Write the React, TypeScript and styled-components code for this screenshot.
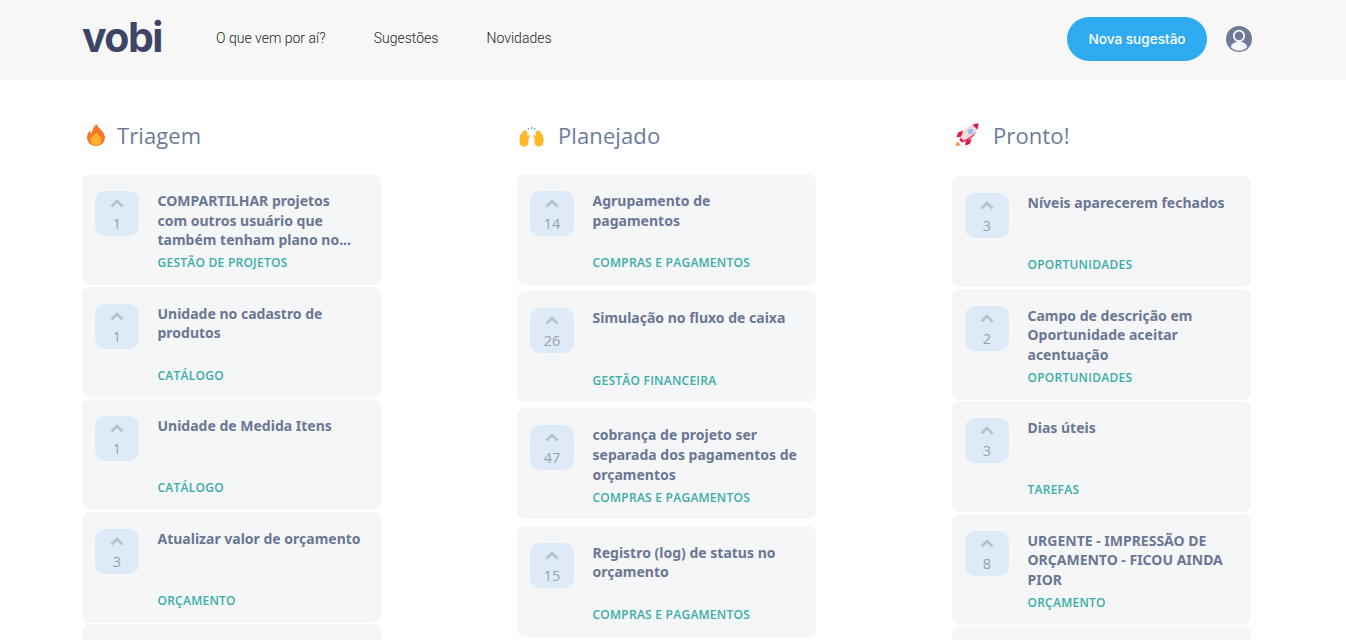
import React from "react";
import styled, { createGlobalStyle } from "styled-components";

const Global = createGlobalStyle`
  html, body { margin: 0; padding: 0; height: 640px; overflow: hidden; background: #fff; }
  * { box-sizing: border-box; }
`;

const Header = styled.header`
  height: 80px;
  background: #f7f7f7;
  display: flex;
  align-items: center;
  padding: 0 94px 0 82px;
`;
const Logo = styled.div`
  width: 134px;
  font: 700 41px/1 Inter, sans-serif;
  letter-spacing: -1.5px;
  color: #3c4565;
  margin-top: -6px;
`;
const Nav = styled.nav`
  display: flex;
  gap: 48.2px;
  flex: 1;
  margin-top: -4px;
`;
const NavLink = styled.a`
  font: 300 14px/20px Roboto, sans-serif;
  color: #222;
`;
const NewButton = styled.button`
  width: 140px;
  height: 44px;
  margin-top: -2px;
  border: 0;
  border-radius: 22px;
  background: #2fabf2;
  color: #fff;
  font: 500 13.6px/20px Inter, sans-serif;
`;
const Avatar = styled.svg`
  width: 26px;
  height: 26px;
  margin-left: 19px;
  margin-top: -2px;
`;
const Board = styled.main`
  display: grid;
  grid-template-columns: repeat(3, 299px);
  column-gap: 136px;
  padding: 0 0 0 82px;
`;
const Column = styled.section``;
const ColumnHead = styled.div<{ $x: number; $gap: number }>`
  display: flex;
  align-items: center;
  height: 30px;
  margin-top: 40px;
  padding-left: ${(p) => p.$x}px;
  gap: ${(p) => p.$gap}px;
`;
const ColumnTitle = styled.h2`
  margin: 0;
  font: 400 22px/30px "Open Sans", sans-serif;
  letter-spacing: 0.1px;
  color: #6d7a99;
`;
const FlameIcon = styled.svg`
  width: 18px;
  height: 22px;
  flex: none;
`;
const HandsIcon = styled.svg`
  width: 25px;
  height: 20px;
  flex: none;
  margin-top: 3px;
`;
const RocketIcon = styled.svg`
  width: 24px;
  height: 24px;
  flex: none;
`;
const CardList = styled.div<{ $top: number; $gap: number }>`
  display: flex;
  flex-direction: column;
  gap: ${(p) => p.$gap}px;
  margin-top: ${(p) => p.$top}px;
`;
const Card = styled.article`
  height: 111px;
  flex: none;
  display: flex;
  gap: 18.5px;
  padding: 17px 13px 13.7px;
  background: #f4f6f8;
  border-radius: 8px;
`;
const Vote = styled.div`
  width: 44px;
  height: 45px;
  flex: none;
  border-radius: 10px;
  background: #deebf7;
  display: flex;
  flex-direction: column;
  align-items: center;
  padding-top: 8px;
`;
const Chevron = styled.svg`
  width: 14px;
  height: 9px;
`;
const Count = styled.span`
  font: 400 14.5px/18px "Open Sans", sans-serif;
  color: #97a2b2;
  margin-top: 7px;
`;
const Body = styled.div`
  display: flex;
  flex-direction: column;
  min-width: 0;
  width: 205.5px;
`;
const Title = styled.h3`
  margin: 0;
  font: 700 14px/19.6px "Noto Sans", sans-serif;
  color: #6c7693;
`;
const Tag = styled.span`
  margin-top: auto;
  font: 600 12px/16px "Open Sans", sans-serif;
  letter-spacing: 0.25px;
  color: #3bada5;
  text-transform: uppercase;
`;

const Flame = () => (
  <FlameIcon viewBox="0 0 18 22">
    <path d="M9.500 0c.5 3.500 8.500 7 8.500 14a9 8 0 0 1-18 0c0-3.500 1.500-6 3.200-7.500.1 1.500.7 2.500 1.500 3C4.800 6 7 2.500 9.500 0z" fill="#f4762a" />
    <path d="M9.500 8c.6 2.500 5 4.500 5 8a5.500 5.500 0 0 1-11 0c0-3 4.500-5 6-8z" fill="#fdb02b" />
  </FlameIcon>
);
const Hands = () => (
  <HandsIcon viewBox="0 0 25 20">
    <g fill="#fdb92e">
      <path d="M.5 13l.5-5c.1-1 1.400-1 1.500 0l.3-3c.1-1 1.600-1 1.700 0l.2-1c.1-1 1.600-1 1.700 0l.1.5c.2-1 1.600-.9 1.700.1l.2 4.900 1-1.200c.7-.8 1.900 0 1.400 1l-1.400 2.700.2 2.500c.1 3-2 5-5 5C2 20 .2 17 .5 13z" />
      <path d="M24.500 13l-.5-5c-.1-1-1.400-1-1.500 0l-.3-3c-.1-1-1.600-1-1.700 0l-.2-1c-.1-1-1.600-1-1.700 0l-.1.5c-.2-1-1.600-.9-1.700.1l-.2 4.900-1-1.200c-.7-.8-1.900 0-1.400 1l1.400 2.700-.2 2.500c-.1 3 2 5 5 5 2.800 0 4.600-3 4.300-7z" />
    </g>
    <g fill="#5aa9e6">
      <rect x="12" y="0" width="1.200" height="2" />
      <rect x="8.800" y="1" width="1.200" height="1.600" />
      <rect x="15.200" y="1" width="1.200" height="1.600" />
    </g>
  </HandsIcon>
);
const Rocket = () => (
  <RocketIcon viewBox="0 0 24 24">
    <path d="M.5 23.500L2 18l4 4z" fill="#f79a5b" />
    <path d="M8 7.500L3 9.500 1.500 14.500l5.500-1zM16.500 16l-1.500 5-5 1.500 1-5.500z" fill="#dd1d4b" />
    <path d="M23.500.5c-6.500 0-11.500 3-15.500 9l-2.500 5 4 4 5-2.500c6-4 9-9.500 9-15.500z" fill="#f3d9df" />
    <path d="M23.500.5c-2 0-4.500.5-6 1.200l4.800 4.800c.7-1.500 1.200-4 1.200-6zM5.500 14.500l4 4-2.500 1L4.500 17zM9.500 18.500l5-2.500c3-2 5.200-4.300 6.800-7C18 12 13.500 15.500 8.500 17.500z" fill="#dd1d4b" />
    <circle cx="15.500" cy="8.500" r="2.700" fill="#8cc4ea" />
  </RocketIcon>
);

type Item = { n: number; t: string; tag: string };
const cols: { name: string; icon: React.ReactNode; x: number; hg: number; top: number; gap: number; items: Item[]; more?: boolean }[] = [
  {
    name: "Triagem", icon: <Flame />, x: 5, hg: 12, top: 24, gap: 1.5, more: true,
    items: [
      { n: 1, t: "COMPARTILHAR projetos com outros usuário que também tenham plano no...", tag: "Gestão de projetos" },
      { n: 1, t: "Unidade no cadastro de produtos", tag: "Catálogo" },
      { n: 1, t: "Unidade de Medida Itens", tag: "Catálogo" },
      { n: 3, t: "Atualizar valor de orçamento", tag: "Orçamento" },
    ],
  },
  {
    name: "Planejado", icon: <Hands />, x: 2, hg: 14, top: 24, gap: 6.2,
    items: [
      { n: 14, t: "Agrupamento de pagamentos", tag: "Compras e pagamentos" },
      { n: 26, t: "Simulação no fluxo de caixa", tag: "Gestão financeira" },
      { n: 47, t: "cobrança de projeto ser separada dos pagamentos de orçamentos", tag: "Compras e pagamentos" },
      { n: 15, t: "Registro (log) de status no orçamento", tag: "Compras e pagamentos" },
    ],
  },
  {
    name: "Pronto!", icon: <Rocket />, x: 3, hg: 14, top: 26, gap: 1.5,
    more: true,
    items: [
      { n: 3, t: "Níveis aparecerem fechados", tag: "Oportunidades" },
      { n: 2, t: "Campo de descrição em Oportunidade aceitar acentuação", tag: "Oportunidades" },
      { n: 3, t: "Dias úteis", tag: "Tarefas" },
      { n: 8, t: "URGENTE - IMPRESSÃO DE ORÇAMENTO - FICOU AINDA PIOR", tag: "Orçamento" },
    ],
  },
];

export default function App() {
  return (
    <>
      <Global />
      <Header>
        <Logo>vobi</Logo>
        <Nav>
          <NavLink>O que vem por aí?</NavLink>
          <NavLink>Sugestões</NavLink>
          <NavLink>Novidades</NavLink>
        </Nav>
        <NewButton>Nova sugestão</NewButton>
        <Avatar viewBox="0 0 25 25">
          <circle cx="12.500" cy="12.500" r="12.500" fill="#6f7a99" />
          <circle cx="12.500" cy="9.500" r="5" fill="none" stroke="#f4f5f8" strokeWidth="1.800" />
          <path d="M4.500 20c1.500-3.500 4.500-5 8-5s6.500 1.500 8 5a10.500 10.500 0 0 1-16 0z" fill="#f4f5f8" />
        </Avatar>
      </Header>
      <Board>
        {cols.map((c) => (
          <Column key={c.name}>
            <ColumnHead $x={c.x} $gap={c.hg}>
              {c.icon}
              <ColumnTitle>{c.name}</ColumnTitle>
            </ColumnHead>
            <CardList $top={c.top} $gap={c.gap}>
              {c.items.map((it) => (
                <Card key={it.t}>
                  <Vote>
                    <Chevron viewBox="0 0 14 9">
                      <path d="M1.500 7.500L7 2l5.500 5.500" fill="none" stroke="#b7c0cc" strokeWidth="2.600" />
                    </Chevron>
                    <Count>{it.n}</Count>
                  </Vote>
                  <Body>
                    <Title>{it.t}</Title>
                    <Tag>{it.tag}</Tag>
                  </Body>
                </Card>
              ))}
              {c.more && <Card />}
            </CardList>
          </Column>
        ))}
      </Board>
    </>
  );
}
